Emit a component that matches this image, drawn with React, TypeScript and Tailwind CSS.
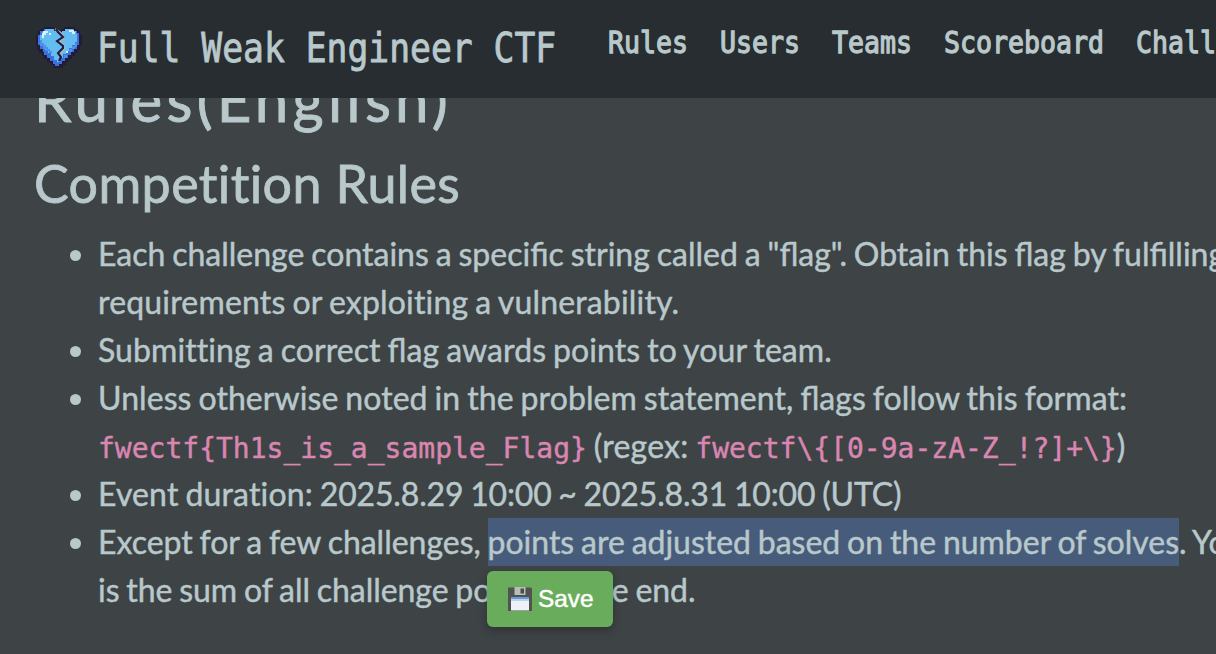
import type { ReactNode } from "react";

function BrokenHeart() {
  return (
    <svg className="h-[42px] w-[46px] shrink-0" viewBox="0 0 46 42" aria-hidden="true">
      <path
        d="M8 1h11v2h3v2h3V3h3V1h11v2h3v2h2v4h2v11h-2v4h-2v3h-3v3h-3v3h-3v3h-3v3h-3v3h-3v2h-4v-2h-3v-3h-3v-3h-3v-3h-3v-3H6v-3H3v-3H1v-4H0V9h2V5h2V3h4z"
        fill="#231b38"
      />
      <path
        d="M8 3h10v2h3v2h5V5h3V3h9v2h3v2h2v12h-2v4h-3v3h-3v3h-3v3h-3v3h-3v3h-3v2h-4v-2h-2v-3h-3v-3h-3v-3h-3v-3H7v-3H4v-4H2V9h2V5h4z"
        fill="#3a70df"
      />
      <path
        d="M9 3h9v2h3v2h5V5h3V3h8v2h3v3h1v8h-2v3h-3v3h-3v3h-3v3h-3v4h-3v4h-3v-2h-3v-4h-3v-3h-3v-3H9v-4H6v-3H4V9h2V6h3z"
        fill="#64bdf0"
      />
      <path d="M4 14h2v3h2v2h2v2h2v2h2v2h2v2h-3v-2h-3v-2H7v-3H4zM36 20h3v-3h2v4h-2v2h-3v3h-3v-3h3zM28 29h3v3h-3z" fill="#4b91e8" />
      <path d="M7 5h5v2h-2v2H8v3H6V7h1zM13 7h2v2h-2zM33 4h5v2h1v2h-3V6h-3zM30 25h2v2h-2z" fill="#daf1fa" />
      <path d="M19 3l6 4 3 5-5 3 5 5v3l-4 4 1 5" fill="none" stroke="#aeb5c4" strokeWidth="2" />
      <path d="M20 3l2 3 5 5-6 4 6 5v2l-5 5 3 4-2 4" fill="none" stroke="#231b38" strokeWidth="2.1" />
    </svg>
  );
}

function Floppy() {
  return (
    <svg className="h-6 w-6 shrink-0" viewBox="0 0 24 24" aria-hidden="true">
      <path d="M0 .5h23l1 1V24H0z" fill="#50534f" />
      <path d="M6.5 0h11v8h-11z" fill="#b9bdba" />
      <path d="M12.5 1.5H16v5h-3.5z" fill="#4b4f4c" />
      <path d="M3 10h18v13.5H3z" fill="#eff1f6" />
      <path d="M3 10h18v2H3z" fill="#679bd2" />
      <path d="M3 12h18v2H3z" fill="#b3d4f3" />
    </svg>
  );
}

function NavLink({ children, width }: { children: ReactNode; width: string }) {
  return (
    <a className={`block shrink-0 ${width}`}>
      <span className="inline-block origin-left scale-x-[0.857] whitespace-nowrap [-webkit-text-stroke:1.3px_#b8c8cb]">{children}</span>
    </a>
  );
}

function Code({ children }: { children: ReactNode }) {
  return <code className="font-['DejaVu_Sans_Mono',monospace] text-[28px] leading-none text-[#d986b0]">{children}</code>;
}

function Lig({ children }: { children: ReactNode }) {
  return <span className="tracking-normal [font-variant-ligatures:normal]">{children}</span>;
}

export default function App() {
  return (
    <div className="relative h-[654px] w-[1216px] overflow-hidden bg-[#3e4346] font-['Lato',sans-serif] text-[#b8c8cb] [-webkit-text-stroke:0.45px_currentColor] [font-variant-ligatures:none]">
      <header className="relative z-10 flex h-[98px] items-start bg-[#282d31] pl-9 font-['DejaVu_Sans_Mono',monospace]">
        <div className="flex w-[572px] shrink-0 pt-[26px]">
          <BrokenHeart />
          <span className="ml-[15px] mt-[-2px] inline-block origin-left scale-x-[0.852] whitespace-nowrap text-[40.7px] leading-[48px] [-webkit-text-stroke:0.9px_currentColor]">
            Full Weak Engineer CTF
          </span>
        </div>
        <nav className="flex gap-8 pt-[22px] text-[31px] leading-10">
          <NavLink width="w-20">Rules</NavLink>
          <NavLink width="w-20">Users</NavLink>
          <NavLink width="w-20">Teams</NavLink>
          <NavLink width="w-40">Scoreboard</NavLink>
          <NavLink width="w-40">Challenges</NavLink>
        </nav>
      </header>
      <main className="pl-[34px]">
        <h1 className="-mt-[37px] text-[60px] leading-[77px] tracking-[4.2px] [-webkit-text-stroke:0.9px_currentColor]">Rules(English)</h1>
        <h2 className="mt-[14px] text-[52px] leading-[62px] tracking-[0.38px] [-webkit-text-stroke:0.8px_currentColor]">Competition Rules</h2>
        <ul className="mt-[16px] w-[1400px] list-none text-[32px] leading-[48px] [word-spacing:-1.3px] [&>li]:relative [&>li]:whitespace-nowrap [&>li]:pl-[64px] [&>li]:before:absolute [&>li]:before:left-[36px] [&>li]:before:top-[20px] [&>li]:before:size-[11px] [&>li]:before:rounded-full [&>li]:before:bg-[#b8c8cb] [&>li]:before:content-['']">
          <li>
            Each challenge contains a speci<Lig>fi</Lig>c string called a "<Lig>fl</Lig>ag". Obtain this <Lig>fl</Lig>ag by ful<Lig>fi</Lig>lling
            <br />
            <span className="tracking-[0.17px]">requirements or exploiting a vulnerability.</span>
          </li>
          <li className="tracking-[0.08px]">
            Submitting a correct <Lig>fl</Lig>ag awards points to your team.
          </li>
          <li className="h-24">
            <span className="tracking-[0.07px]">
              Unless otherwise noted in the problem statement, <Lig>fl</Lig>ags follow this format:
            </span>
            <br />
            <Code>{"fwectf{Th1s_is_a_sample_Flag}"}</Code> <span className="tracking-[0.2px]">(regex:</span> <Code>{"fwectf\\{[0-9a-zA-Z_!?]+\\}"}</Code>)
          </li>
          <li>
            <span className="tracking-[0.14px]">Event duration:</span> <span className="tracking-[-0.15px]">2025.8.29 10:00 ~ 2025.8.31 10:00 (UTC)</span>
          </li>
          <li className="tracking-[-0.02px]">
            Except for a few challenges, <span className="inline-block h-12 bg-[#475c7a] align-top">points are adjusted based on the number of solves</span>. Your score
            <br />
            <span className="tracking-[-0.05px]">is the sum of all challenge points at the end.</span>
          </li>
        </ul>
      </main>
      <button className="absolute left-[487px] top-[571px] flex h-14 w-[126px] items-center gap-[6px] rounded-md bg-[#69ad5c] pl-[21px] font-['Liberation_Sans',sans-serif] text-[24.4px] text-white shadow-[0_4px_10px_rgba(0,0,0,0.25)]">
        <Floppy />
        Save
      </button>
    </div>
  );
}
